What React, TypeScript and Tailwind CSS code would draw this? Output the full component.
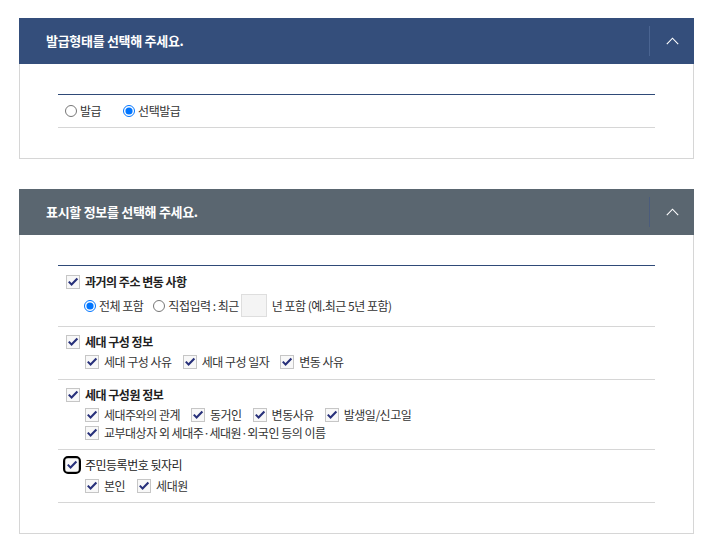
import React from 'react';

const FONT = { fontFamily: '"Noto Sans CJK KR", "Noto Sans", sans-serif' };

function Chevron() {
  return (
    <svg width="13" height="8" viewBox="0 0 13 8" fill="none">
      <path d="M0.8 7.2 L6.5 1.2 L12.2 7.2" stroke="#fff" strokeWidth="1.1" />
    </svg>
  );
}

function PanelHeader({ title, tone }: { title: string; tone: 'navy' | 'slate' }) {
  const navy = tone === 'navy';
  return (
    <div className={navy ? 'h-[46px] bg-[#344e7b] flex items-center' : 'h-[46px] bg-[#5a6670] flex items-center'}>
      <h2 className="flex-1 pl-[27px] text-[13px] font-bold text-white tracking-[-0.3px]">{title}</h2>
      <div
        className={
          navy
            ? 'w-[45px] h-[30px] border-l border-[#4a6491] flex items-center justify-center'
            : 'w-[45px] h-[30px] border-l border-[#4b5c7c] flex items-center justify-center'
        }
      >
        <Chevron />
      </div>
    </div>
  );
}

function Check({ focused = false }: { focused?: boolean }) {
  const box = (
    <span className="w-[14px] h-[14px] border border-[#c6c6c6] bg-[#f8f8f8] flex items-center justify-center shrink-0">
      <svg width="12" height="12" viewBox="0 0 12 12" fill="none">
        <path d="M1.8 5.6 L4.6 8.6 L10.4 2.6" stroke="#27307a" strokeWidth="2.1" />
      </svg>
    </span>
  );
  if (!focused) return box;
  return <span className="rounded-[3px] outline-2 outline-black outline -ml-[1px] mr-[1px]">{box}</span>;
}

function Radio({ checked }: { checked: boolean }) {
  return (
    <input
      type="radio"
      checked={checked}
      readOnly
      className="m-0 w-[12px] h-[12px] shrink-0"
    />
  );
}

function CheckItem({ label, focused }: { label: string; focused?: boolean }) {
  return (
    <span className="flex items-center gap-[5px]">
      <Check focused={focused} />
      <span>{label}</span>
    </span>
  );
}

export default function App() {
  return (
    <div className="w-[717px] min-h-[551px] bg-white pt-[18px] pl-[19px] text-[12px] text-[#333]" style={FONT}>
      <section className="w-[675px]">
        <PanelHeader title="발급형태를 선택해 주세요." tone="navy" />
        <div className="border border-t-0 border-[#d6d6d6] px-[38px] py-[30px] tracking-[-0.5px]">
          <div className="border-t border-[#2f4a78]">
            <div className="h-[33px] border-b border-[#d6d6d6] pl-[7px] flex items-center gap-[22px]">
              <label className="flex items-center gap-[3px]">
                <Radio checked={false} />
                <span>발급</span>
              </label>
              <label className="flex items-center gap-[3px]">
                <Radio checked />
                <span>선택발급</span>
              </label>
            </div>
          </div>
        </div>
      </section>

      <section className="w-[675px] mt-[30px]">
        <PanelHeader title="표시할 정보를 선택해 주세요." tone="slate" />
        <div className="border border-t-0 border-[#d6d6d6] px-[38px] py-[30px] tracking-[-0.5px]">
          <div className="border-t border-[#2f4a78]">
            {/* 과거의 주소 변동 사항 */}
            <div className="border-b border-[#d6d6d6] pt-[7px] pb-[8px]">
              <div className="h-[18px] pl-[8px] flex items-center font-bold text-[#222]">
                <CheckItem label="과거의 주소 변동 사항" />
              </div>
              <div className="h-[25px] mt-[2px] pl-[26px] flex items-center">
                <label className="flex items-center gap-[3px]">
                  <Radio checked />
                  <span>전체 포함</span>
                </label>
                <label className="flex items-center gap-[3px] ml-[10px]">
                  <Radio checked={false} />
                  <span>직접입력 : 최근</span>
                </label>
                <input
                  type="text"
                  readOnly
                  className="ml-[2px] w-[26px] h-[23px] bg-[#f4f4f4] border border-[#dedede]"
                />
                <span className="ml-[5px]">년 포함 (예.최근 5년 포함)</span>
              </div>
            </div>

            {/* 세대 구성 정보 */}
            <div className="border-b border-[#d6d6d6] pt-[6px] pb-[8px]">
              <div className="h-[18px] pl-[8px] flex items-center font-bold text-[#222]">
                <CheckItem label="세대 구성 정보" />
              </div>
              <div className="h-[18px] mt-[2px] pl-[27px] flex items-center gap-[11px]">
                <CheckItem label="세대 구성 사유" />
                <CheckItem label="세대 구성 일자" />
                <CheckItem label="변동 사유" />
              </div>
            </div>

            {/* 세대 구성원 정보 */}
            <div className="border-b border-[#d6d6d6] pt-[6px] pb-[7px]">
              <div className="h-[18px] pl-[8px] flex items-center font-bold text-[#222]">
                <CheckItem label="세대 구성원 정보" />
              </div>
              <div className="h-[18px] mt-[2px] pl-[27px] flex items-center gap-[11px]">
                <CheckItem label="세대주와의 관계" />
                <CheckItem label="동거인" />
                <CheckItem label="변동사유" />
                <CheckItem label="발생일/신고일" />
              </div>
              <div className="h-[18px] pl-[27px] flex items-center">
                <CheckItem label="교부대상자 외 세대주·세대원·외국인 등의 이름" />
              </div>
            </div>

            {/* 주민등록번호 뒷자리 */}
            <div className="border-b border-[#d6d6d6] pt-[6px] pb-[7px]">
              <div className="h-[18px] pl-[8px] flex items-center text-[#222]">
                <CheckItem label="주민등록번호 뒷자리" focused />
              </div>
              <div className="h-[18px] mt-[3px] pl-[27px] flex items-center gap-[12px]">
                <CheckItem label="본인" />
                <CheckItem label="세대원" />
              </div>
            </div>
          </div>
        </div>
      </section>
    </div>
  );
}
